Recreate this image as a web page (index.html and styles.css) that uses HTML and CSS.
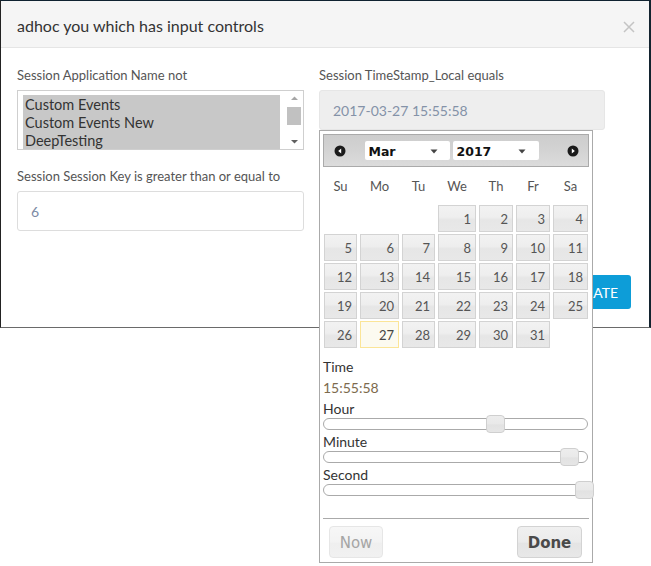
FILE: index.html
```html
<!DOCTYPE html>
<html>
<head>
<meta charset="utf-8">
<link rel="stylesheet" href="styles.css">
</head>
<body>
<div class="modal">
  <div class="modal-header">
    <h4 class="modal-title">adhoc you which has input controls</h4>
    <svg class="close" width="12" height="12" viewBox="0 0 12 12"><path d="M1 1L11 11M11 1L1 11" stroke="#c4c4c4" stroke-width="1.5" fill="none"/></svg>
  </div>
  <div class="modal-body">
    <div class="cols">
      <div class="col">
        <div class="label">Session Application Name not</div>
        <div class="listbox">
          <div class="options">
            <div class="opt">Custom Events</div>
            <div class="opt">Custom Events New</div>
            <div class="opt">DeepTesting</div>
          </div>
          <div class="scrollbar">
            <svg class="sb-arrow" width="15" height="14" viewBox="0 0 15 14"><path d="M4 9L7.5 5.5L11 9Z" fill="#a6a6a6"/></svg>
            <div class="thumb"></div>
            <div class="sb-space"></div>
            <svg class="sb-arrow" width="15" height="14" viewBox="0 0 15 14"><path d="M4 5L7.5 8.5L11 5Z" fill="#606060"/></svg>
          </div>
        </div>
        <div class="label second">Session Session Key is greater than or equal to</div>
        <div class="input">6</div>
      </div>
      <div class="col picker-col">
        <div class="label">Session TimeStamp_Local equals</div>
        <div class="input readonly">2017-03-27 15:55:58</div>
        <div class="datepicker">
          <div class="dp-header">
            <svg class="dp-nav" width="12" height="12" viewBox="0 0 12 12"><circle cx="6" cy="6" r="5.5" fill="#1a1a1a"/><path d="M7.2 3.4L4.2 6L7.2 8.6Z" fill="#fff"/></svg>
            <div class="dp-selects">
              <div class="dp-select month"><span>Mar</span><svg width="8" height="5" viewBox="0 0 8 5"><path d="M0.5 0.5H7.5L4 4.5Z" fill="#444"/></svg></div>
              <div class="dp-select year"><span>2017</span><svg width="8" height="5" viewBox="0 0 8 5"><path d="M0.5 0.5H7.5L4 4.5Z" fill="#444"/></svg></div>
            </div>
            <svg class="dp-nav" width="12" height="12" viewBox="0 0 12 12"><circle cx="6" cy="6" r="5.5" fill="#1a1a1a"/><path d="M4.8 3.4L7.8 6L4.8 8.6Z" fill="#fff"/></svg>
          </div>
          <div class="dp-grid dp-names">
            <div>Su</div><div>Mo</div><div>Tu</div><div>We</div><div>Th</div><div>Fr</div><div>Sa</div>
          </div>
          <div class="dp-grid dp-days">
            <div class="empty"></div><div class="empty"></div><div class="empty"></div>
            <div class="day">1</div><div class="day">2</div><div class="day">3</div><div class="day">4</div>
            <div class="day">5</div><div class="day">6</div><div class="day">7</div><div class="day">8</div><div class="day">9</div><div class="day">10</div><div class="day">11</div>
            <div class="day">12</div><div class="day">13</div><div class="day">14</div><div class="day">15</div><div class="day">16</div><div class="day">17</div><div class="day">18</div>
            <div class="day">19</div><div class="day">20</div><div class="day">21</div><div class="day">22</div><div class="day">23</div><div class="day">24</div><div class="day">25</div>
            <div class="day">26</div><div class="day today">27</div><div class="day">28</div><div class="day">29</div><div class="day">30</div><div class="day">31</div><div class="empty"></div>
          </div>
          <div class="dp-time">
            <div class="t-title">Time</div>
            <div class="t-value">15:55:58</div>
            <div class="t-label first">Hour</div>
            <div class="track"><div class="handle" style="left:162px"></div></div>
            <div class="t-label">Minute</div>
            <div class="track"><div class="handle" style="left:236px"></div></div>
            <div class="t-label">Second</div>
            <div class="track"><div class="handle" style="left:251px"></div></div>
          </div>
          <div class="dp-buttons">
            <button class="dp-btn now">Now</button>
            <button class="dp-btn done">Done</button>
          </div>
        </div>
      </div>
    </div>
    <div class="footer">
      <button class="btn-gen">GENERATE</button>
    </div>
  </div>
</div>
</body>
</html>
```

FILE: styles.css
```css
* { box-sizing: border-box; }

html, body {
  margin: 0;
  padding: 0;
  background: #fff;
}

body {
  font-family: Lato, "Liberation Sans", sans-serif;
  color: #333;
  width: 651px;
  height: 566px;
  overflow: hidden;
}

.modal {
  width: 651px;
  border-top: 1px solid #0f2230;
  border-left: 1px solid #222;
  border-right: 2px solid #13232f;
  border-bottom: 1px solid #6a6a6a;
  background: #fff;
}

.modal-header {
  height: 47px;
  background: #f5f5f5;
  border-bottom: 1px solid #e5e5e5;
  display: flex;
  align-items: center;
  justify-content: space-between;
  padding: 0 14px 0 16px;
}

.modal-title {
  margin: 0;
  font-size: 16px;
  font-weight: normal;
  color: #333;
  line-height: 20px;
  padding-top: 3px;
}

.close {
  display: block;
  margin-top: 6px;
}

.modal-body {
  padding: 17px 0 18px 16px;
}

.cols {
  display: grid;
  grid-template-columns: 287px 286px;
  column-gap: 15px;
}

.col {
  display: flex;
  flex-direction: column;
}

.picker-col {
  position: relative;
}

.label {
  font-size: 13px;
  line-height: 18px;
  padding-top: 1px;
  height: 18px;
  color: #555;
  margin-bottom: 7px;
}

.label.second {
  margin-top: 16px;
}

.listbox {
  height: 60px;
  border: 1px solid #cfcfcf;
  display: flex;
  background: #fff;
}

.options {
  flex: 1;
  padding: 4px 6px 0 5px;
  overflow: hidden;
}

.opt {
  background: #c8c8c8;
  height: 18px;
  line-height: 18px;
  padding-top: 1px;
  font-size: 14.5px;
  padding-left: 2px;
  color: #333;
}

.scrollbar {
  width: 16px;
  margin-right: 1px;
  display: flex;
  flex-direction: column;
  align-items: center;
  background: #fff;
}

.sb-arrow {
  display: block;
  flex: none;
}

.thumb {
  width: 14px;
  height: 18px;
  background: #c1c1c1;
  margin-top: 2px;
}

.sb-space {
  flex: 1;
}

.input {
  height: 40px;
  border: 1px solid #ddd;
  border-radius: 3px;
  padding: 2px 0 0 13px;
  font-size: 14px;
  line-height: 36px;
  color: #7c8aa5;
  background: #fff;
}

.input.readonly {
  background: #eee;
  border-color: #e6e6e6;
  color: #8492a8;
}

/* datepicker */
.datepicker {
  position: absolute;
  top: 65px;
  left: 0;
  width: 274px;
  height: 433px;
  border: 1px solid #aaa;
  background: #fff;
  padding: 3px 3px 0 3px;
  z-index: 5;
  font-family: Lato, "Liberation Sans", sans-serif;
}

.dp-header {
  height: 33px;
  border: 1px solid #aaa;
  background: linear-gradient(to bottom, #cdcdcd 0%, #d3d3d3 50%, #dcdcdc 100%);
  display: flex;
  align-items: center;
  padding: 0 9px 0 10px;
  justify-content: space-between;
}

.dp-nav {
  display: block;
  margin-top: 1px;
}

.dp-selects {
  display: flex;
  gap: 3px;
  margin-left: 7px;
  margin-right: 17px;
}

.dp-select {
  height: 19px;
  background: #fff;
  border-radius: 2px;
  display: flex;
  align-items: center;
  justify-content: space-between;
  padding: 1px 12px 0 4px;
  font-family: "DejaVu Sans", Verdana, sans-serif;
  font-weight: bold;
  font-size: 12.5px;
  color: #111;
}

.dp-select svg {
  margin-top: 1px;
}

.dp-select.month { width: 85px; }
.dp-select.year { width: 86px; padding-right: 13px; }

.dp-grid {
  display: grid;
  grid-template-columns: 33px 39px 33px 38px 34px 34px 35px;
  column-gap: 3px;
  margin-left: 1px;
}

.dp-names {
  margin-top: 3px;
  height: 30px;
  padding-top: 2px;
  align-items: center;
  text-align: center;
  font-size: 13px;
  color: #555;
}

.dp-days {
  margin-top: 5px;
  row-gap: 2px;
  grid-auto-rows: 27px;
}

.day {
  border: 1px solid #d3d3d3;
  background: linear-gradient(to bottom, #f2f2f2 0%, #eeeeee 45%, #e6e6e6 55%, #e8e8e8 100%);
  text-align: right;
  padding: 2px 4px 0 0;
  font-size: 13px;
  line-height: 23px;
  color: #555;
}

.day.today {
  border-color: #fbe598;
  background: #fcfaf0;
  color: #444;
}

.dp-time {
  margin-top: 9px;
  font-size: 14px;
  color: #333;
}

.t-title, .t-value, .t-label {
  line-height: 18px;
  height: 18px;
  padding-top: 1px;
}

.t-value {
  margin-top: 3px;
  color: #7d6a4d;
}

.t-label {
  margin-top: 2px;
}

.t-label.first {
  margin-top: 3px;
}

.track {
  position: relative;
  height: 12px;
  margin-top: 1px;
  width: 265px;
  border: 1px solid #aaa;
  border-radius: 6px;
  background: #fff;
}

.handle {
  position: absolute;
  top: -4px;
  width: 19px;
  height: 18px;
  border: 1px solid #cfcfcf;
  border-radius: 4px;
  background: linear-gradient(to bottom, #ededed 0%, #e9e9e9 50%, #e2e2e2 55%, #e6e6e6 100%);
}

.dp-buttons {
  margin-top: 22px;
  border-top: 1px solid #aaa;
  padding: 7px 7px 0 6px;
  display: flex;
  justify-content: space-between;
}

.dp-btn {
  height: 32px;
  border: 1px solid #d3d3d3;
  border-radius: 4px;
  background: linear-gradient(to bottom, #f0f0f0 0%, #ebebeb 50%, #e4e4e4 55%, #e8e8e8 100%);
  font-family: "DejaVu Sans", Verdana, sans-serif;
  font-size: 15px;
  padding: 2px 0 0 0;
  margin: 0;
}

.dp-btn.now {
  width: 54px;
  color: #a5a5a5;
  border-color: #e6e6e6;
  background: linear-gradient(to bottom, #f7f7f7 0%, #f3f3f3 50%, #efefef 55%, #f1f1f1 100%);
}

.dp-btn.done {
  width: 65px;
  font-weight: bold;
  color: #4a4a4a;
}

.footer {
  display: flex;
  justify-content: flex-end;
  margin-top: 44px;
  padding-right: 18px;
}

.btn-gen {
  height: 34px;
  background: #0d9dd8;
  border: none;
  border-radius: 3px;
  color: #fff;
  font-family: Lato, "Liberation Sans", sans-serif;
  font-size: 14px;
  padding: 0 13px 0 14px;
  margin: 0;
}
```
